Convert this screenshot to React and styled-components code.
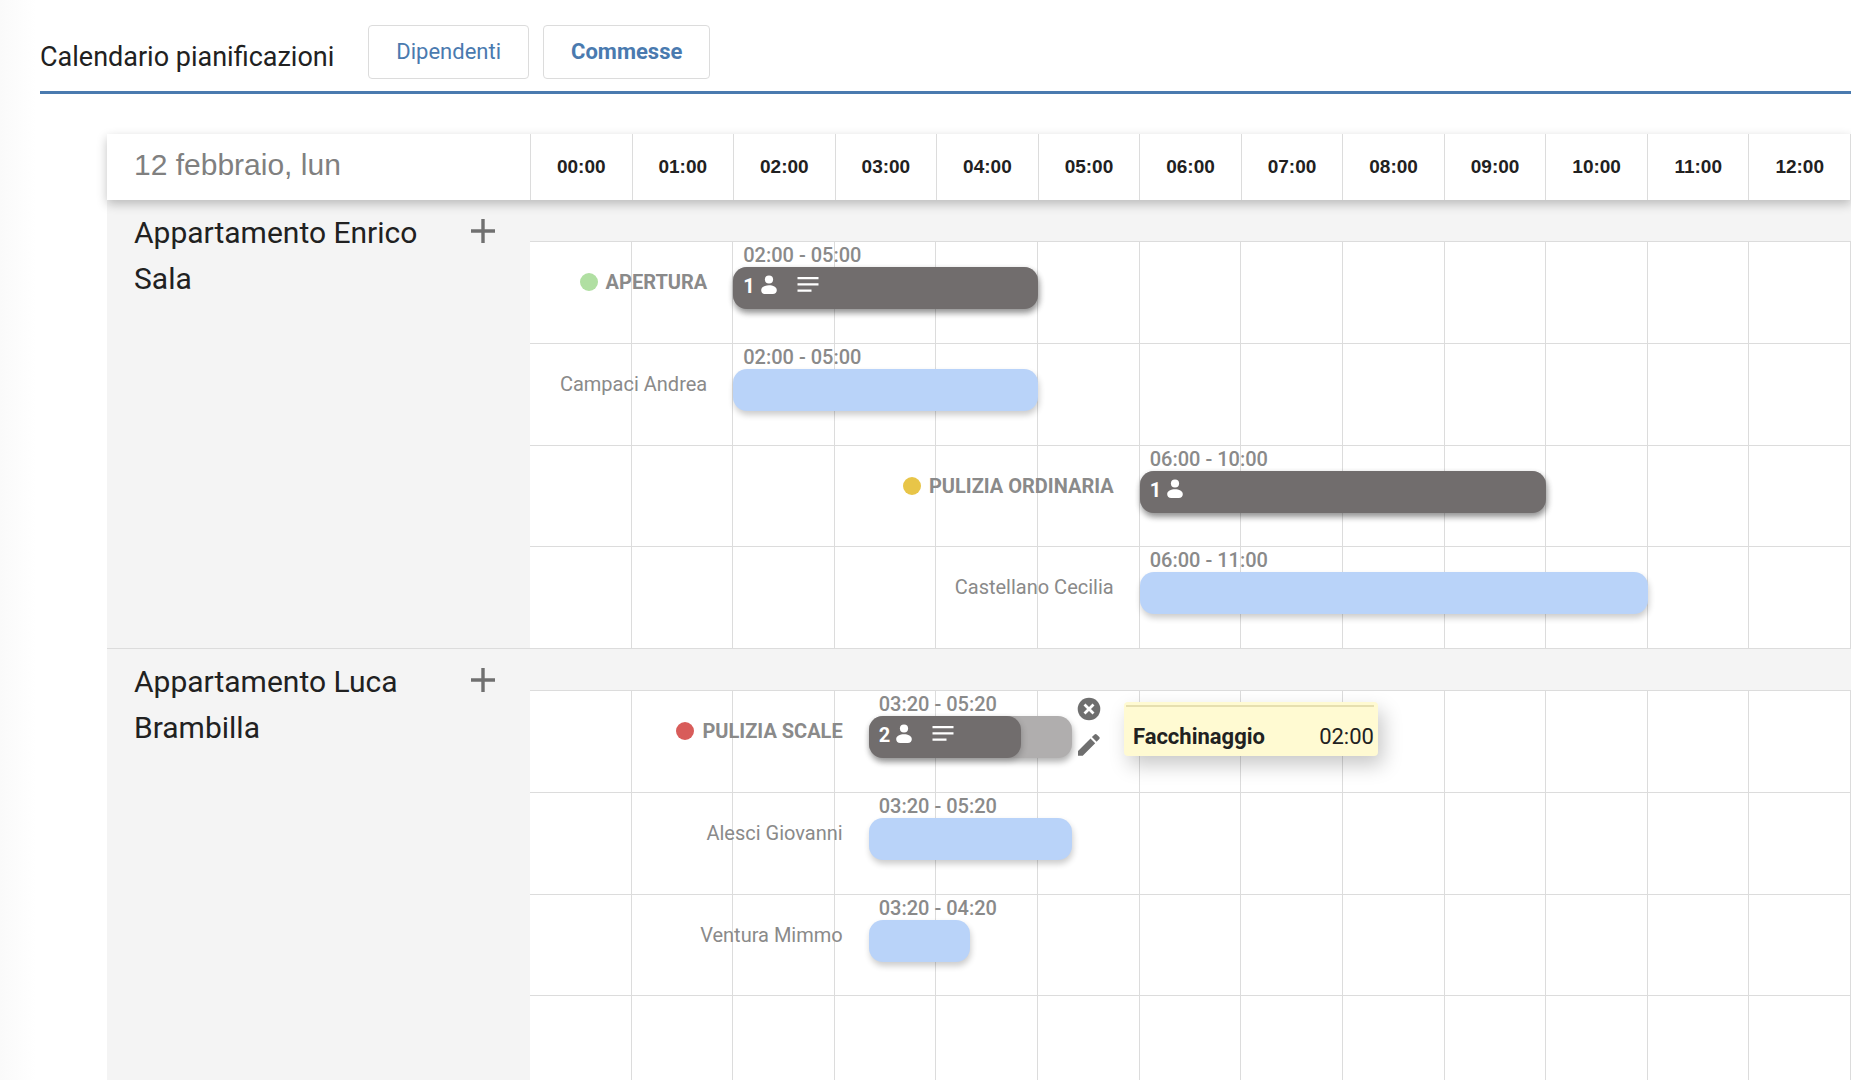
import React from "react";
import styled, { createGlobalStyle } from "styled-components";

const HOURS = 13;

const GlobalStyle = createGlobalStyle`
  *, *::before, *::after { box-sizing: border-box; }
  body {
    margin: 0;
    background: #fff;
    color: #212121;
    font-family: Roboto, "Liberation Sans", sans-serif;
  }
  button { font-family: inherit; cursor: pointer; }
`;

const Page = styled.div`
  height: 100vh;
  overflow: hidden;
  background: linear-gradient(to right, #fafafa, #fff 36px);
`;

const PageHeader = styled.header`
  display: flex;
  align-items: flex-start;
  margin-left: 40px;
  padding: 25px 0 12px;
  border-bottom: 3px solid #4a7aaf;
`;

const Title = styled.h1`
  margin: 0 34px 0 0;
  padding-top: 15px;
  font-size: 27px;
  line-height: 34px;
  font-weight: 400;
`;

const Tabs = styled.nav`
  display: flex;
  gap: 14px;
`;

const TabButton = styled.button`
  height: 54px;
  padding: 0 27px;
  border: 1px solid #dcdcdc;
  border-radius: 4px;
  background: #fff;
  color: #4a7aaf;
  font-size: 22px;
  line-height: 28px;
  font-weight: ${(p) => (p.$active ? 700 : 400)};
`;

const Scheduler = styled.main`
  margin: 40px 0 0 107px;
`;

const split = `
  display: grid;
  grid-template-columns: 423px minmax(0, 1fr);
`;

const TimeHeader = styled.div`
  ${split}
  position: relative;
  z-index: 1;
  height: 66px;
  background: #fff;
  box-shadow: 0 4px 10px rgba(0, 0, 0, 0.24);
`;

const DateLabel = styled.div`
  padding: 13px 27px 0;
  color: #808080;
  font-family: "Liberation Sans", Arial, sans-serif;
  font-size: 30px;
  line-height: 36px;
`;

const HourRow = styled.div`
  display: grid;
  grid-template-columns: repeat(${HOURS}, minmax(0, 1fr));
  border-left: 1px solid #dcdcdc;
`;

const HourCell = styled.div`
  display: flex;
  align-items: center;
  justify-content: center;
  border-right: 1px solid #dcdcdc;
  font-family: "Liberation Sans", Arial, sans-serif;
  font-size: 19px;
  font-weight: 700;
`;

const Group = styled.section`
  ${split}
  min-height: 449px;
`;

const GroupSide = styled.div`
  display: flex;
  align-items: flex-start;
  justify-content: space-between;
  padding: 10px 33px 0 27px;
  border-bottom: 1px solid #dcdcdc;
  background: #f4f4f4;
`;

const GroupName = styled.h2`
  width: 300px;
  margin: 0;
  font-size: 30px;
  line-height: 46px;
  font-weight: 400;
`;

const AddButton = styled.button`
  display: flex;
  padding: 7px 0;
  border: 0;
  background: none;
  color: #707070;
`;

const Rows = styled.div`
  display: grid;
  grid-template-rows: 42px repeat(4, minmax(0, 1fr));
`;

const Band = styled.div`
  border-bottom: 1px solid #dcdcdc;
  background: #f4f4f4;
`;

const Row = styled.div`
  position: relative;
  display: grid;
  grid-template-columns: repeat(${HOURS}, minmax(0, 1fr));
`;

const Cell = styled.div`
  border-right: 1px solid #dcdcdc;
  border-bottom: 1px solid #dcdcdc;
  background: #fff;
`;

const Slot = styled.div`
  position: absolute;
  top: 0;
  bottom: 0;
`;

const SlotLabel = styled.div`
  position: absolute;
  top: 27px;
  right: 100%;
  display: flex;
  align-items: center;
  gap: 8px;
  margin-right: 26px;
  color: #8a8a8a;
  font-size: 20px;
  line-height: 26px;
  font-weight: ${(p) => (p.$strong ? 700 : 400)};
  white-space: nowrap;
`;

const Dot = styled.span`
  width: 18px;
  height: 18px;
  border-radius: 50%;
  background: ${(p) => p.$color};
`;

const TimeRange = styled.div`
  height: 25px;
  padding-left: 10px;
  color: #8a8a8a;
  font-size: 20px;
  line-height: 27px;
  font-weight: 500;
  white-space: nowrap;
`;

const Bar = styled.div`
  display: flex;
  height: 42px;
  border-radius: 14px;
  background: ${(p) => p.$bg};
  box-shadow: 1px 4px 6px rgba(0, 0, 0, ${(p) => p.$shade});
`;

const BarFill = styled.div`
  display: flex;
  align-items: flex-start;
  padding: 7px 10px 0;
  border-radius: 14px;
  background: #716d6d;
  box-shadow: 1px 3px 6px rgba(0, 0, 0, 0.2);
  color: #fff;
  font-size: 20px;
  line-height: 24px;
  font-weight: 700;
`;

const Actions = styled.div`
  position: absolute;
  top: 6px;
  left: 100%;
  display: flex;
  flex-direction: column;
  gap: 12px;
  margin-left: 5px;
`;

const IconButton = styled.button`
  display: flex;
  padding: 0;
  border: 0;
  background: none;
  color: #6f6f6f;
`;

const Note = styled.div`
  position: absolute;
  top: 11px;
  left: 100%;
  width: 254px;
  height: 54px;
  margin-left: 52px;
  padding: 3px 4px 0 2px;
  border-radius: 4px;
  background: #fffad2;
  box-shadow: 5px 9px 20px rgba(0, 0, 0, 0.22);
`;

const NoteBody = styled.div`
  display: flex;
  justify-content: space-between;
  padding: 16px 0 0 7px;
  border-top: 2px solid #e6dfb0;
  font-size: 22px;
  line-height: 28px;
`;

const PlusIcon = () => (
  <svg width="28" height="28" viewBox="0 0 28 28" fill="currentColor" aria-hidden="true">
    <path d="M12.300 2h3.400v10.300h10.300v3.400h-10.300v10.300h-3.400v-10.300h-10.300v-3.400h10.300z" />
  </svg>
);

const PersonIcon = () => (
  <svg width="16" height="22" viewBox="0 0 16 22" fill="currentColor" aria-hidden="true">
    <circle cx="8" cy="5.500" r="4.100" />
    <path d="M0.200 16.200C0.200 13 4 11.200 8 11.200s7.800 1.800 7.800 5c0 2.400-1.600 3.800-4 3.800H4.200c-2.400 0-4-1.400-4-3.800z" />
  </svg>
);

const NotesIcon = () => (
  <svg width="22" height="22" viewBox="0 0 22 22" fill="currentColor" aria-hidden="true">
    <path d="M0.500 3h21v2.300h-21zM0.500 9.200h21v2.300h-21zM0.500 15.400h14v2.300h-14z" />
  </svg>
);

const CloseIcon = () => (
  <svg width="24" height="24" viewBox="0 0 24 24" aria-hidden="true">
    <circle cx="12" cy="12" r="11.300" fill="currentColor" />
    <path d="M7.500 7.500l9 9M16.500 7.500l-9 9" stroke="#fff" strokeWidth="2.800" />
  </svg>
);

const PencilIcon = () => (
  <svg width="24" height="24" viewBox="0 0 24 24" fill="currentColor" aria-hidden="true">
    <path d="M1 18v4.700h4.700L18.200 10.200l-4.700-4.700zM22.300 6.100a1.500 1.500 0 0 0 0-2.100l-2.600-2.600a1.500 1.500 0 0 0-2.100 0l-2.700 2.700 4.700 4.700z" />
  </svg>
);

const Count = styled.span`
  margin-right: 6px;
`;

const NotesMark = styled.span`
  display: flex;
  margin-left: 20px;
`;

const groups = [
  {
    name: "Appartamento Enrico Sala",
    rows: [
      { label: "APERTURA", dot: "#b0dfa2", start: 120, end: 300, people: 1, notes: true },
      { label: "Campaci Andrea", start: 120, end: 300 },
      { label: "PULIZIA ORDINARIA", dot: "#e8c548", start: 360, end: 600, people: 1 },
      { label: "Castellano Cecilia", start: 360, end: 660 },
    ],
  },
  {
    name: "Appartamento Luca Brambilla",
    rows: [
      {
        label: "PULIZIA SCALE",
        dot: "#d85c5a",
        start: 200,
        end: 320,
        people: 2,
        notes: true,
        done: 0.75,
        extra: { name: "Facchinaggio", time: "02:00" },
      },
      { label: "Alesci Giovanni", start: 200, end: 320 },
      { label: "Ventura Mimmo", start: 200, end: 260 },
      null,
    ],
  },
];

const clock = (m) =>
  `${String(Math.floor(m / 60)).padStart(2, "0")}:${String(m % 60).padStart(2, "0")}`;
const percent = (m) => `${(m / (HOURS * 60)) * 100}%`;

function Booking({ item }) {
  const isJob = Boolean(item.people);
  return (
    <Slot style={{ left: percent(item.start), width: percent(item.end - item.start) }}>
      <SlotLabel $strong={isJob}>
        {item.dot && <Dot $color={item.dot} />}
        {item.label}
      </SlotLabel>
      <TimeRange>{`${clock(item.start)} - ${clock(item.end)}`}</TimeRange>
      {isJob ? (
        <Bar $bg="#b0aeae" $shade={0.3}>
          <BarFill style={{ width: `${(item.done || 1) * 100}%` }}>
            <Count>{item.people}</Count>
            <PersonIcon />
            {item.notes && (
              <NotesMark>
                <NotesIcon />
              </NotesMark>
            )}
          </BarFill>
        </Bar>
      ) : (
        <Bar $bg="#b9d3f9" $shade={0.2} />
      )}
      {item.extra && (
        <>
          <Actions>
            <IconButton type="button" aria-label="Elimina">
              <CloseIcon />
            </IconButton>
            <IconButton type="button" aria-label="Modifica">
              <PencilIcon />
            </IconButton>
          </Actions>
          <Note>
            <NoteBody>
              <strong>{item.extra.name}</strong>
              <span>{item.extra.time}</span>
            </NoteBody>
          </Note>
        </>
      )}
    </Slot>
  );
}

export default function App() {
  const hours = Array.from({ length: HOURS }, (_, i) => i);
  return (
    <Page>
      <GlobalStyle />
      <PageHeader>
        <Title>Calendario pianificazioni</Title>
        <Tabs>
          <TabButton type="button">Dipendenti</TabButton>
          <TabButton type="button" $active>
            Commesse
          </TabButton>
        </Tabs>
      </PageHeader>
      <Scheduler>
        <TimeHeader>
          <DateLabel>12 febbraio, lun</DateLabel>
          <HourRow>
            {hours.map((h) => (
              <HourCell key={h}>{clock(h * 60)}</HourCell>
            ))}
          </HourRow>
        </TimeHeader>
        {groups.map((group) => (
          <Group key={group.name}>
            <GroupSide>
              <GroupName>{group.name}</GroupName>
              <AddButton type="button" aria-label="Aggiungi">
                <PlusIcon />
              </AddButton>
            </GroupSide>
            <Rows>
              <Band />
              {group.rows.map((item, i) => (
                <Row key={i}>
                  {hours.map((h) => (
                    <Cell key={h} />
                  ))}
                  {item && <Booking item={item} />}
                </Row>
              ))}
            </Rows>
          </Group>
        ))}
      </Scheduler>
    </Page>
  );
}
